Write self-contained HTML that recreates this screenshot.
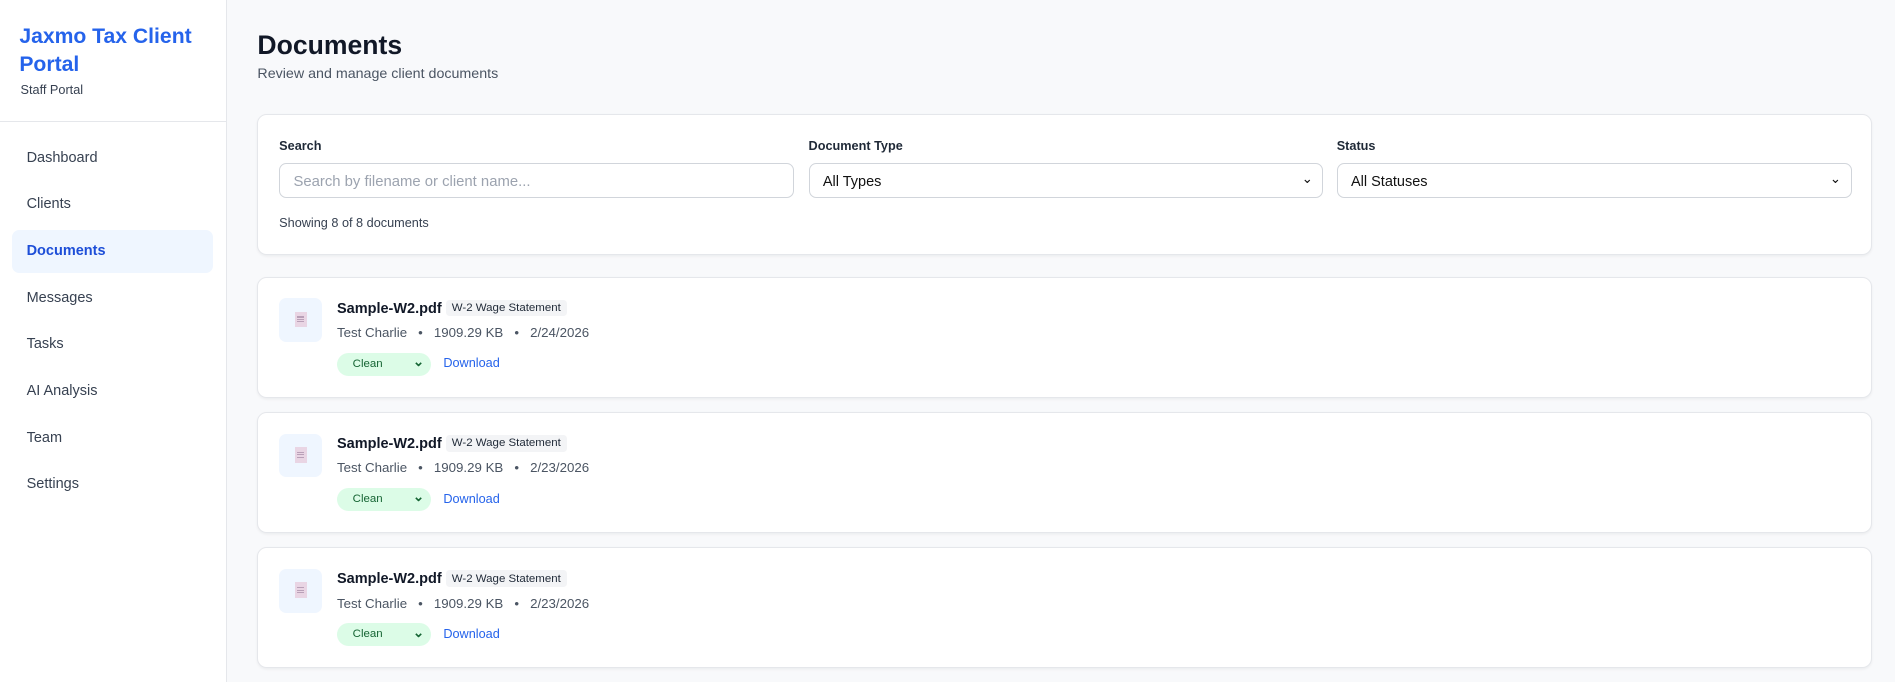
<!DOCTYPE html>
<html><head><style>
html{zoom:1.2086}
*{box-sizing:border-box;margin:0;padding:0}
body{width:1568px;height:564px;overflow:hidden;background:#f8f9fb;font-family:"Liberation Sans",sans-serif;color:#111827;position:relative}
.side{position:absolute;left:0;top:0;width:188px;height:564px;background:#fff;border-right:1px solid #e5e7eb}
.brand{position:absolute;left:16px;top:19px;font-size:17.5px;font-weight:bold;color:#2563eb;line-height:23px}
.staff{position:absolute;left:17px;top:69px;font-size:10.5px;color:#374151}
.hr{position:absolute;left:0;top:100px;width:188px;border-top:1px solid #e5e7eb}
.nav{position:absolute;left:22px;font-size:12px;color:#374151}
.act{position:absolute;left:10px;top:190px;width:166px;height:36px;background:#eff6ff;border-radius:6px}
h1{position:absolute;left:213px;top:25px;font-size:22px;font-weight:bold}
.sub{position:absolute;left:213px;top:55px;font-size:11.8px;color:#4b5563}
.card{position:absolute;left:213px;width:1336px;background:#fff;border:1px solid #e5e7eb;border-radius:8px;box-shadow:0 1px 2px rgba(0,0,0,.05)}
.lbl{position:absolute;top:115px;font-size:10.5px;font-weight:bold;color:#1f2937}
.inp{position:absolute;top:135px;height:29px;width:426px;border:1px solid #d1d5db;border-radius:6px;background:#fff;font-size:12px;padding:8px 11px;color:#111}
.inp i{position:absolute;right:8px;top:6px;font-style:normal;font-size:11px}
.ic{position:absolute;left:17px;top:17px;width:36px;height:36px;background:#eff6ff;border-radius:6px}
.ic div{position:absolute;left:13px;top:11px;width:10px;height:13px;background:#e9d5e4}
.ic div b{position:absolute;left:2px;width:6px;height:1px;background:#b9a0b8}
.fn{position:absolute;left:65px;top:19px;font-size:12px;font-weight:bold}
.bd{position:absolute;left:155px;top:18px;background:#f3f4f6;border-radius:3px;font-size:9.5px;padding:2px 5px;color:#1f2937}
.meta{position:absolute;left:65px;top:39px;font-size:11px;color:#4b5563;white-space:pre}
.cl{position:absolute;left:65px;top:62px;width:78px;height:19px;background:#dcfce7;border-radius:10px;font-size:9.5px;color:#166534;padding:4px 13px}
.cl i{position:absolute;right:6px;top:1px;font-style:normal;font-size:11px;font-weight:bold}
.dl{position:absolute;left:153px;top:65px;font-size:10.5px;color:#2563eb}
</style></head><body>
<div class="side">
<div class="brand">Jaxmo Tax Client<br>Portal</div>
<div class="staff">Staff Portal</div>
<div class="hr"></div>
<div class="act"></div>
<div class="nav" style="top:124px">Dashboard</div>
<div class="nav" style="top:162px">Clients</div>
<div class="nav" style="top:201px;color:#1d4ed8;font-weight:bold">Documents</div>
<div class="nav" style="top:240px">Messages</div>
<div class="nav" style="top:278px">Tasks</div>
<div class="nav" style="top:317px">AI Analysis</div>
<div class="nav" style="top:356px">Team</div>
<div class="nav" style="top:394px">Settings</div>
</div>
<h1>Documents</h1>
<div class="sub">Review and manage client documents</div>
<div class="card" style="top:94px;height:117px"></div>
<div class="lbl" style="left:231px">Search</div>
<div class="lbl" style="left:669px">Document Type</div>
<div class="lbl" style="left:1106px">Status</div>
<div class="inp" style="left:231px;color:#9ca3af;font-size:12.3px">Search by filename or client name...</div>
<div class="inp" style="left:669px">All Types<i>⌄</i></div>
<div class="inp" style="left:1106px">All Statuses<i>⌄</i></div>
<div style="position:absolute;left:231px;top:179px;font-size:10.5px;color:#374151">Showing 8 of 8 documents</div>

<div class="card" style="top:229px;height:100px"><div class="ic"><div><b style="top:4px"></b><b style="top:6px"></b><b style="top:8px"></b></div></div><div class="fn">Sample-W2.pdf</div><div class="bd">W-2 Wage Statement</div><div class="meta">Test Charlie   •   1909.29 KB   •   2/24/2026</div><div class="cl">Clean<i>⌄</i></div><div class="dl">Download</div></div>
<div class="card" style="top:341px;height:100px"><div class="ic"><div><b style="top:4px"></b><b style="top:6px"></b><b style="top:8px"></b></div></div><div class="fn">Sample-W2.pdf</div><div class="bd">W-2 Wage Statement</div><div class="meta">Test Charlie   •   1909.29 KB   •   2/23/2026</div><div class="cl">Clean<i>⌄</i></div><div class="dl">Download</div></div>
<div class="card" style="top:453px;height:100px"><div class="ic"><div><b style="top:4px"></b><b style="top:6px"></b><b style="top:8px"></b></div></div><div class="fn">Sample-W2.pdf</div><div class="bd">W-2 Wage Statement</div><div class="meta">Test Charlie   •   1909.29 KB   •   2/23/2026</div><div class="cl">Clean<i>⌄</i></div><div class="dl">Download</div></div>
</body></html>
